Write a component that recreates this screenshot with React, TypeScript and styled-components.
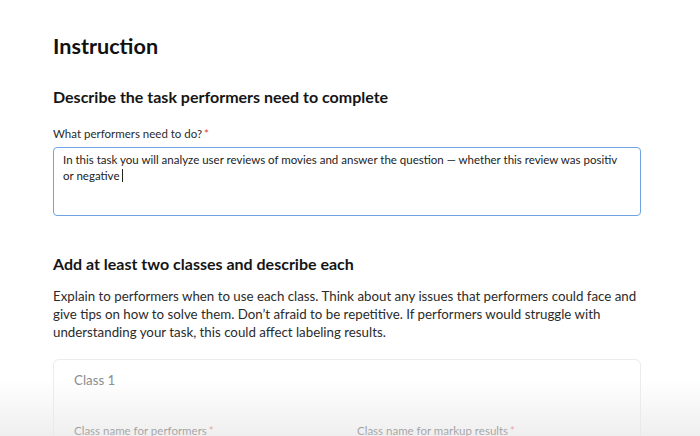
import styled, { createGlobalStyle } from "styled-components";

const GlobalStyle = createGlobalStyle`
  html, body {
    margin: 0;
    padding: 0;
    background: #ffffff;
  }
  body {
    font-family: Lato, "Noto Sans", sans-serif;
    color: #1f1f1f;
    overflow: hidden;
  }
`;

const Page = styled.div`
  position: relative;
  width: 700px;
  height: 436px;
  overflow: hidden;
`;

const Content = styled.main`
  display: flex;
  flex-direction: column;
  padding: 33px 59px 0 53px;
`;

const Title = styled.h1`
  margin: 0;
  font-size: 21.6px;
  font-weight: 700;
  line-height: 26px;
  color: #111;
`;

const SectionTitle = styled.h2<{ $top: number }>`
  margin: ${(p) => p.$top}px 0 0;
  font-size: 16px;
  font-weight: 700;
  line-height: 22px;
  color: #151515;
`;

const Label = styled.label`
  display: block;
  font-size: 11.5px;
  line-height: 14px;
  color: #2a2a2a;
`;

const Required = styled.span`
  color: #e3453a;
  margin-left: 2px;
`;

const Field = styled.div`
  margin-top: 19px;
  display: flex;
  flex-direction: column;
  gap: 6px;
`;

const TextArea = styled.div`
  height: 69px;
  box-sizing: border-box;
  border: 1.5px solid #6ea4e4;
  border-radius: 4px;
  padding: 4px 9px;
  font-size: 11.5px;
  line-height: 16px;
  color: #222;
`;

const Caret = styled.span`
  display: inline-block;
  width: 1px;
  height: 13px;
  background: #222;
  margin-left: 3px;
  vertical-align: -2px;
`;

const Paragraph = styled.p`
  margin: 12px 0 0;
  font-size: 13.3px;
  line-height: 18px;
  color: #2b2b2b;
`;

const Card = styled.section`
  margin-top: 18px;
  border: 1px solid #ececec;
  border-radius: 6px;
  padding: 11px 20px 0;
  height: 120px;
`;

const CardTitle = styled.div`
  font-size: 13.3px;
  line-height: 18px;
  color: #8a8a8a;
`;

const Columns = styled.div`
  display: grid;
  grid-template-columns: 1fr 1fr;
  column-gap: 20px;
  margin-top: 35px;
`;

const Fade = styled.div`
  position: absolute;
  left: 0;
  right: 0;
  bottom: 0;
  height: 56px;
  background: linear-gradient(to bottom, rgba(232, 232, 232, 0), rgba(232, 232, 232, 0.7));
  pointer-events: none;
`;

export default function App() {
  return (
    <Page>
      <GlobalStyle />
      <Content>
        <Title>Instruction</Title>
        <SectionTitle $top={27}>Describe the task performers need to complete</SectionTitle>
        <Field>
          <Label>
            What performers need to do?<Required>*</Required>
          </Label>
          <TextArea>
            In this task you will analyze user reviews of movies and answer the question — whether this review was positiv
            <br />
            or negative
            <Caret />
          </TextArea>
        </Field>
        <SectionTitle $top={37}>Add at least two classes and describe each</SectionTitle>
        <Paragraph>
          Explain to performers when to use each class. Think about any issues that performers could face and give tips
          on how to solve them. Don’t afraid to be repetitive. If performers would struggle with understanding your task,
          this could affect labeling results.
        </Paragraph>
        <Card>
          <CardTitle>Class 1</CardTitle>
          <Columns>
            <Label>
              Class name for performers<Required>*</Required>
            </Label>
            <Label>
              Class name for markup results<Required>*</Required>
            </Label>
          </Columns>
        </Card>
      </Content>
      <Fade />
    </Page>
  );
}
